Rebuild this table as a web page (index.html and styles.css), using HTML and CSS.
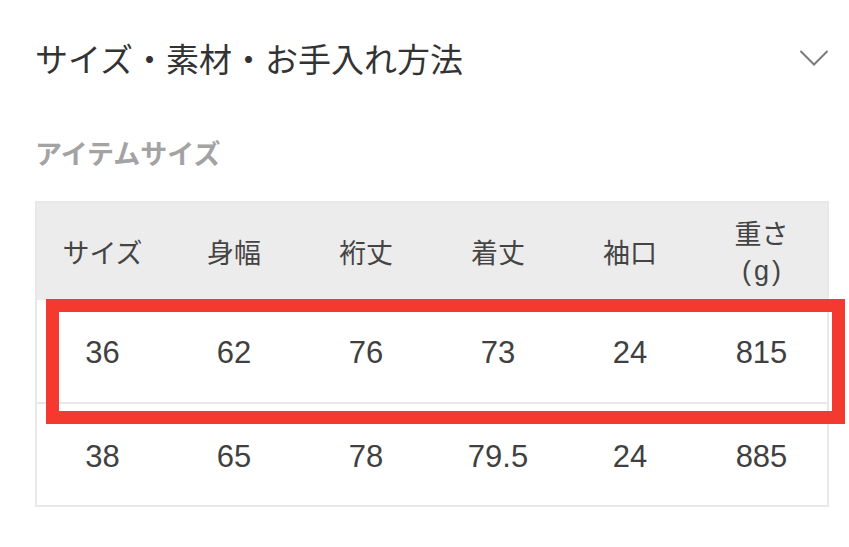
FILE: index.html
```html
<!DOCTYPE html>
<html lang="ja">
<head>
<meta charset="utf-8">
<link rel="stylesheet" href="styles.css">
</head>
<body>
<div class="page">
  <div class="accordion-head">
    <h2 class="title">サイズ・素材・お手入れ方法</h2>
    <svg class="chevron" width="30" height="18" viewBox="0 0 30 18"><path d="M1.5 2 L15 15.5 L28.5 2" fill="none" stroke="#7a7a7a" stroke-width="2"/></svg>
  </div>
  <h3 class="subtitle">アイテムサイズ</h3>
  <div class="table-wrap">
    <table class="size-table">
      <thead>
        <tr><th>サイズ</th><th>身幅</th><th>裄丈</th><th>着丈</th><th>袖口</th><th>重さ<br><span class="unit">(g)</span></th></tr>
      </thead>
      <tbody>
        <tr><td>36</td><td>62</td><td>76</td><td>73</td><td>24</td><td>815</td></tr>
        <tr><td>38</td><td>65</td><td>78</td><td>79.5</td><td>24</td><td>885</td></tr>
      </tbody>
    </table>
    <div class="highlight"></div>
  </div>
</div>
</body>
</html>
```

FILE: styles.css
```css
html, body {
  margin: 0;
  padding: 0;
  background: #ffffff;
}
body {
  font-family: "Liberation Sans", "Noto Sans CJK JP", sans-serif;
  color: #333333;
}
.page {
  padding: 38px 0 0 35px;
  width: 794px;
}
.accordion-head {
  display: flex;
  align-items: center;
  justify-content: space-between;
  height: 40px;
}
.title {
  margin: 0;
  font-family: "Noto Sans CJK JP", sans-serif;
  font-weight: 400;
  font-size: 33px;
  line-height: 40px;
  color: #333333;
}
.subtitle {
  margin: 58px 0 0 0;
  font-family: "Noto Sans CJK JP", sans-serif;
  font-weight: 700;
  font-size: 27px;
  line-height: 34px;
  color: #a3a3a3;
}
.table-wrap {
  position: relative;
  margin-top: 31px;
}
.size-table {
  width: 794px;
  border-collapse: collapse;
  border: 2px solid #e8e8e8;
  table-layout: fixed;
}
.size-table th {
  background: #ececec;
  height: 97px;
  padding: 0;
  font-family: "Noto Sans CJK JP", sans-serif;
  font-weight: 400;
  font-size: 27px;
  line-height: 36px;
  color: #444444;
  text-align: center;
  vertical-align: middle;
}
.unit {
  font-family: "Liberation Sans", sans-serif;
  letter-spacing: 3px;
  padding-left: 3px;
}
.size-table td {
  height: 103px;
  padding: 4px 0 0 0;
  box-sizing: border-box;
  font-size: 31px;
  color: #404040;
  text-align: center;
  vertical-align: middle;
  border-top: 2px solid #e8e8e8;
}
.size-table tbody tr:first-child td {
  border-top: none;
}
.highlight {
  position: absolute;
  left: 11px;
  top: 98px;
  width: 773px;
  height: 99px;
  border: 13px solid #f43a2f;
}
```
